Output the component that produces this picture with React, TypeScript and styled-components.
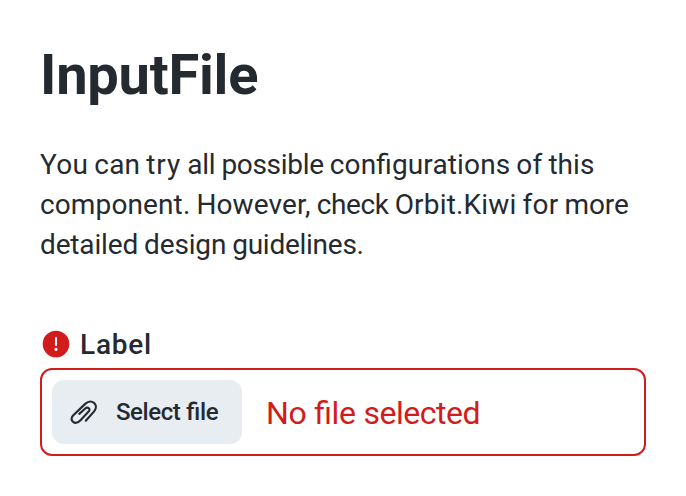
import React, { Fragment } from "react";
import styled, { createGlobalStyle } from "styled-components";

const GlobalStyle = createGlobalStyle`
  *, *::before, *::after { box-sizing: border-box; }
  body { margin: 0; background: #fff; font-family: Roboto, sans-serif; color: #252a31; }
`;

const Page = styled.main`
  width: 686px;
  height: 496px;
  padding: 41px 40px 40px;
  overflow: hidden;
`;

const Title = styled.h1`
  margin: 0;
  font-size: 56px;
  line-height: 68px;
  font-weight: 700;
  letter-spacing: -0.22px;
`;

const Description = styled.p`
  margin: 36px 0 0;
  font-size: 28px;
  line-height: 40px;
  white-space: nowrap;
  word-spacing: -0.93px;
`;

const Word = styled.span<{ $track: number }>`
  letter-spacing: ${({ $track }) => $track}px;
  font-feature-settings: "liga" 1;
`;

const Field = styled.div`
  display: flex;
  flex-direction: column;
  margin-top: 59px;
`;

const LabelRow = styled.div`
  display: flex;
  align-items: center;
  height: 40px;
  margin-bottom: 4px;
`;

const ErrorIcon = styled.svg`
  width: 32px;
  height: 32px;
  margin-right: 8px;
  fill: #d21c1c;
`;

const LabelText = styled.span`
  padding-top: 2px;
  font-size: 28px;
  line-height: 40px;
  font-weight: 500;
  letter-spacing: 0.78px;
`;

const FileInput = styled.div`
  display: flex;
  align-items: center;
  height: 88px;
  padding: 0 10px;
  border: 2px solid #d21c1c;
  border-radius: 12px;
`;

const SelectButton = styled.button`
  display: flex;
  align-items: center;
  width: 190px;
  height: 64px;
  padding: 0 16px;
  border: 0;
  border-radius: 12px;
  background: #e8edf1;
  color: #252a31;
  font: 500 24px/28px Roboto, sans-serif;
  white-space: nowrap;
`;

const ClipIcon = styled.svg`
  flex: none;
  width: 32px;
  height: 32px;
  margin-right: 16px;
`;

const FileStatus = styled.span`
  margin-left: 24px;
  padding-top: 2px;
  font-size: 32px;
  line-height: 40px;
  color: #d21c1c;
`;

type TrackedWord = [text: string, track: number];

const descriptionLines: TrackedWord[][] = [
  [["You", 0.3], ["can", 0.22], ["try", 0.9], ["all", -0.2], ["possible", -0.31], ["configurations", 0.14], ["of", 0.15], ["this", 0.05]],
  [["component.", 0.12], ["However,", 0.13], ["check", -0.36], ["Orbit.Kiwi", 0.17], ["for", 0.27], ["more", -0.1]],
  [["detailed", -0.15], ["design", -0.17], ["guidelines.", -0.26]],
];

function Words({ words }: { words: TrackedWord[] }) {
  return words.map(([text, track], index) => (
    <Fragment key={text}>
      {index > 0 && " "}
      <Word $track={track}>{text}</Word>
    </Fragment>
  ));
}

export default function App() {
  return (
    <>
      <GlobalStyle />
      <Page>
        <Title>InputFile</Title>
        <Description>
          {descriptionLines.map((words, index) => (
            <Fragment key={index}>
              {index > 0 && <br />}
              <Words words={words} />
            </Fragment>
          ))}
        </Description>
        <Field>
          <LabelRow>
            <ErrorIcon viewBox="0 0 32 32" aria-hidden="true">
              <path fillRule="evenodd" d="M16 2.7a13.3 13.3 0 1 0 0 26.6 13.3 13.3 0 0 0 0-26.6ZM16 9a1 1 0 0 1 1 1v7.3a1 1 0 0 1-2 0V10A1 1 0 0 1 16 9ZM16 19.7a1.6 1.6 0 1 1 0 3.2 1.6 1.6 0 0 1 0-3.2Z" />
            </ErrorIcon>
            <LabelText>Label</LabelText>
          </LabelRow>
          <FileInput>
            <SelectButton type="button">
              <ClipIcon viewBox="0 0 32 32" fill="none" stroke="#252a31" strokeWidth="2.15" strokeLinecap="round" aria-hidden="true">
                <path d="M11.3 17.9 17 12.7C20 10.1 23 13 20.6 15.6L12.5 24.2C7 30 0.6 24.6 5.1 19.4L17.2 7.9C23.5 2.2 31.3 8.6 26.3 15.1L17.8 24.7" />
              </ClipIcon>
              <span>
                <Words words={[["Select", -0.42], ["file", -0.35]]} />
              </span>
            </SelectButton>
            <FileStatus>
              <Words words={[["No", -0.4], ["file", -0.4], ["selected", -0.5]]} />
            </FileStatus>
          </FileInput>
        </Field>
      </Page>
    </>
  );
}
